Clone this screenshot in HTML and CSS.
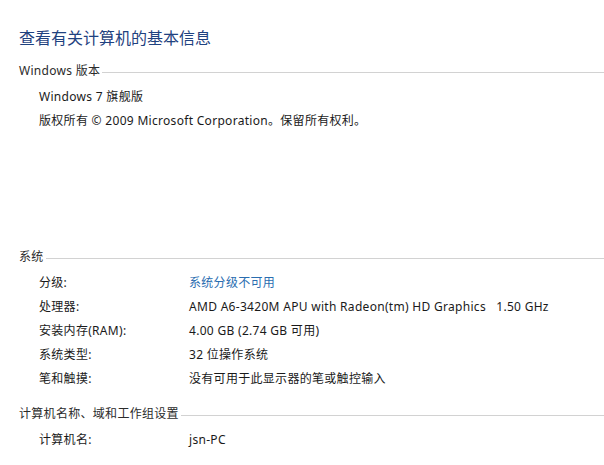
FILE: index.html
```html
<!DOCTYPE html>
<html lang="zh-CN">
<head>
  <meta charset="UTF-8">
  <meta name="viewport" content="width=device-width, initial-scale=1.0">
  <link rel="stylesheet" href="styles.css">
  <title>系统</title>
</head>
<body>
  <h1 class="page-title">查看有关计算机的基本信息</h1>

  <div class="section">
    <div class="section-head">Windows 版本</div>
    <div class="line">Windows 7 旗舰版</div>
    <div class="line">版权所有 © 2009 Microsoft Corporation。保留所有权利。</div>
  </div>

  <div class="section section-system">
    <div class="section-head">系统</div>
    <div class="row"><span class="label">分级:</span><a class="value link" href="#">系统分级不可用</a></div>
    <div class="row"><span class="label">处理器:</span><span class="value">AMD A6-3420M APU with Radeon(tm) HD Graphics&nbsp;&nbsp;&nbsp;1.50 GHz</span></div>
    <div class="row"><span class="label">安装内存(RAM):</span><span class="value">4.00 GB (2.74 GB 可用)</span></div>
    <div class="row"><span class="label">系统类型:</span><span class="value">32 位操作系统</span></div>
    <div class="row"><span class="label">笔和触摸:</span><span class="value">没有可用于此显示器的笔或触控输入</span></div>
  </div>

  <div class="section section-name">
    <div class="section-head">计算机名称、域和工作组设置</div>
    <div class="row"><span class="label">计算机名:</span><span class="value">jsn-PC</span></div>
  </div>
</body>
</html>
```

FILE: styles.css
```css
body {
  font-family: 'Segoe UI', 'Noto Sans', 'Noto Sans CJK SC', sans-serif;
  font-size: 12px;
  letter-spacing: 0.3px;
  color: #1a1a1a;
  background-color: #fff;
  margin: 0;
  padding: 26px 0 0 19px;
  overflow: hidden;
}

.page-title {
  font-size: 16px;
  font-weight: normal;
  letter-spacing: 0;
  line-height: 24px;
  color: #1f4280;
  margin: 0;
}

.section {
  margin-top: 9px;
}

.section-system {
  margin-top: 112px;
}

.section-name {
  margin-top: 11px;
}

.section-head {
  display: flex;
  align-items: center;
  line-height: 24px;
  height: 24px;
  margin-bottom: 2px;
  color: #2b2b2b;
}

.section-head::after {
  content: '';
  flex: 1;
  height: 1px;
  margin-top: 3px;
  margin-left: 2px;
  background-color: #d2d2d2;
}

.line,
.row {
  line-height: 24px;
  height: 24px;
  padding-left: 20px;
}

.row {
  display: flex;
}

.label {
  width: 150px;
}

.value {
  white-space: nowrap;
}

.link {
  color: #2a6db0;
  text-decoration: none;
}
```
